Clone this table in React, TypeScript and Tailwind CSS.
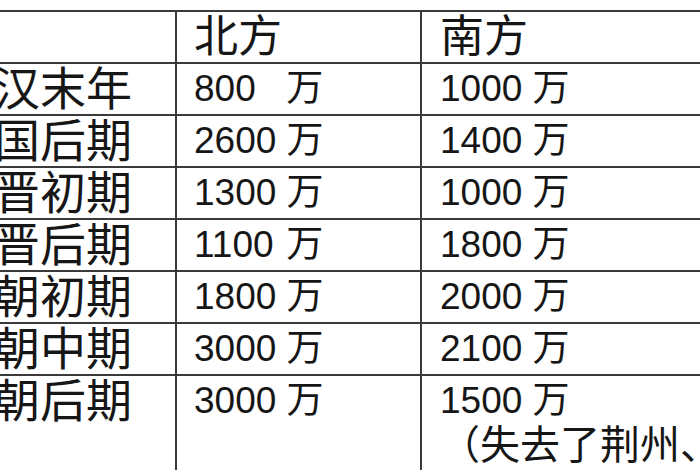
const rows = [
  { era: "东汉末年", north: "800", south: "1000" },
  { era: "三国后期", north: "2600", south: "1400" },
  { era: "西晋初期", north: "1300", south: "1000" },
  { era: "东晋后期", north: "1100", south: "1800" },
  { era: "南朝初期", north: "1800", south: "2000" },
  { era: "南朝中期", north: "3000", south: "2100" },
  { era: "南朝后期", north: "3000", south: "1500", note: "（失去了荆州、" },
];

const font = { fontFamily: '"Liberation Sans", "Noto Sans CJK SC", sans-serif' };
const line = "border-[#3a3a3a]";

function Amount({ value }: { value: string }) {
  return (
    <div className="whitespace-nowrap text-[37px] leading-[44px]">
      <span className="inline-block min-w-[82px]">{value}</span> 万
    </div>
  );
}

export default function App() {
  return (
    <div className="w-[700px] h-[470px] overflow-hidden bg-white pt-[10px]">
      <table
        className="w-[808px] -ml-[57px] border-collapse table-fixed text-[44px] leading-[44px] text-[#161616]"
        style={font}
      >
        <colgroup>
          <col className="w-[233px]" />
          <col className="w-[245px]" />
          <col className="w-[330px]" />
        </colgroup>
        <thead>
          <tr className={`h-[50px] border-t-2 border-b-2 ${line}`}>
            <th className="font-normal text-left" />
            <th className={`font-normal text-left pl-[17px] py-[3px] border-l-2 ${line}`}>北方</th>
            <th className={`font-normal text-left pl-[18px] py-[3px] border-l-2 ${line}`}>南方</th>
          </tr>
        </thead>
        <tbody>
          {rows.map((r) => (
            <tr key={r.era} className={`h-[50px] border-b-2 ${line}`}>
              <td className="pl-[5px] whitespace-nowrap align-top py-[3px] text-[46px]">{r.era}</td>
              <td className={`pl-[17px] align-top py-[3px] border-l-2 ${line}`}>
                <Amount value={r.north} />
              </td>
              <td className={`pl-[18px] align-top py-[3px] border-l-2 ${line}`}>
                <Amount value={r.south} />
                {r.note && (
                  <div className="text-[40px] leading-[44px] whitespace-nowrap pb-[40px]">{r.note}</div>
                )}
              </td>
            </tr>
          ))}
        </tbody>
      </table>
    </div>
  );
}
